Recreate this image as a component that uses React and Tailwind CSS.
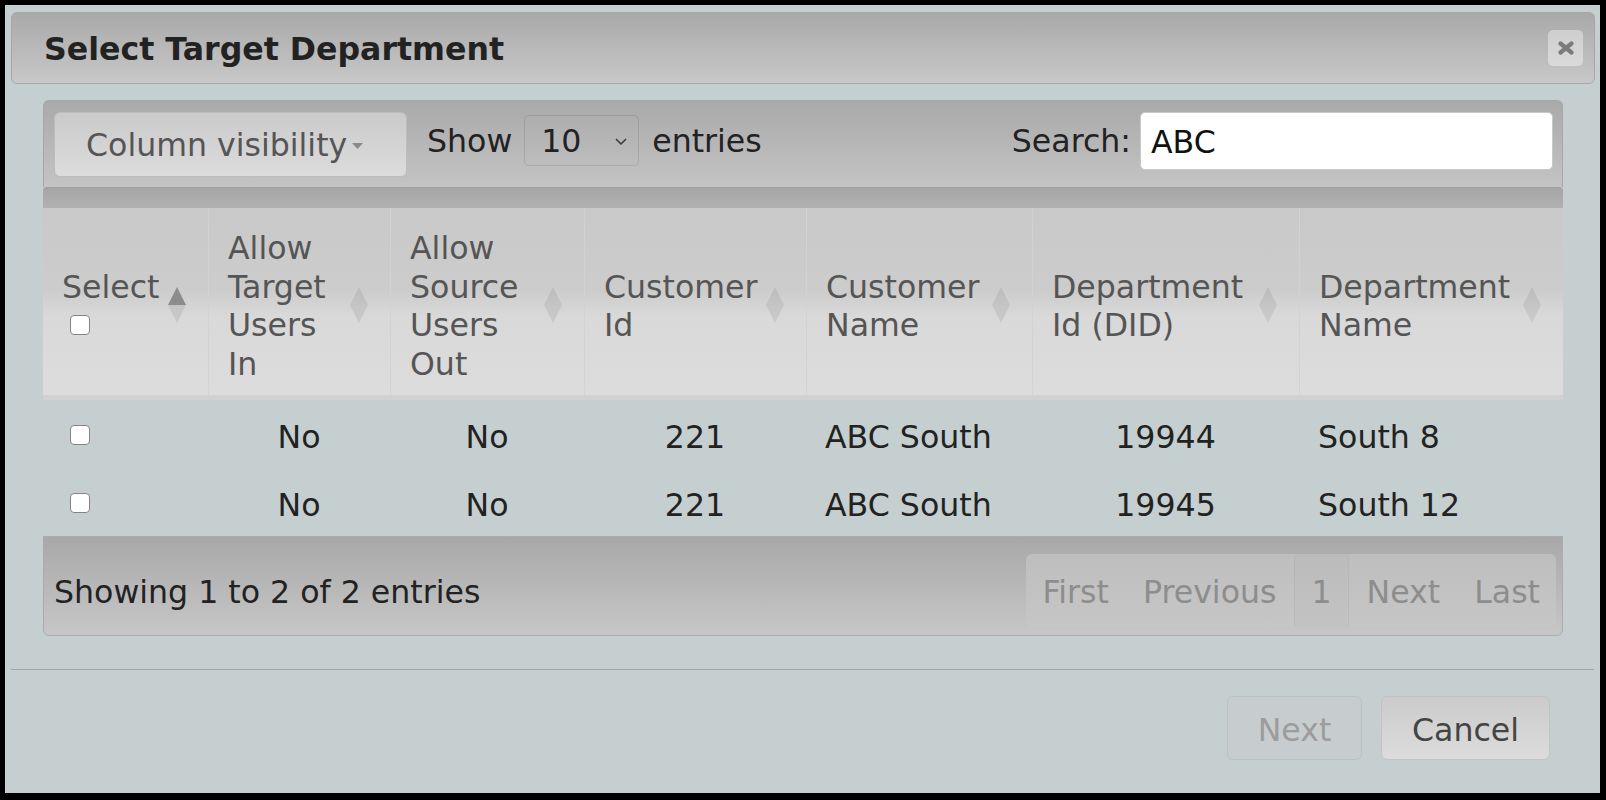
import React from "react";

const columns = [
  { label: "Select", width: "w-[165px]", active: true },
  { label: "Allow Target Users In", width: "w-[182px]" },
  { label: "Allow Source Users Out", width: "w-[194px]" },
  { label: "Customer Id", width: "w-[222px]" },
  { label: "Customer Name", width: "w-[226px]" },
  { label: "Department Id (DID)", width: "w-[267px]" },
  { label: "Department Name", width: "w-[264px]" },
];

const rows = [
  { allowIn: "No", allowOut: "No", customerId: "221", customerName: "ABC South", did: "19944", deptName: "South 8" },
  { allowIn: "No", allowOut: "No", customerId: "221", customerName: "ABC South", did: "19945", deptName: "South 12" },
];

const Checkbox = () => (
  <input
    type="checkbox"
    className="appearance-none block w-[20px] h-[20px] rounded-[4px] border-[1.5px] border-[#858585] bg-white"
  />
);

const SortIcon = ({ active }) => (
  <svg width="18" height="36" viewBox="0 0 18 36" className="absolute right-[22px] top-[79px]">
    <path d="M9 0 L18 18 L0 18 Z" fill={active ? "#8c8c8c" : "rgba(0,0,0,0.07)"} />
    <path d="M0 18 L18 18 L9 36 Z" fill="rgba(0,0,0,0.07)" />
  </svg>
);

const App = () => {
  return (
    <div className="w-[1606px] h-[800px] bg-black pt-[5px] pl-[5px] pr-[6px] pb-[7px] font-['DejaVu_Sans',sans-serif] text-[31.6px] text-[#222]">
      <div className="h-full bg-[#c5cfd0] flex flex-col">
        {/* Title bar */}
        <div className="ml-[6px] mr-[5px] mt-[7px] h-[72px] rounded-[6px] border border-[#a2a8a8] bg-linear-to-b from-[#a9a9a9] to-[#c8c8c8] flex items-center justify-between pl-[32px] pr-[11px]">
          <h1 className="font-bold leading-none pt-[3px] text-[#222]">Select Target Department</h1>
          <button className="w-[35px] h-[36px] rounded-[5px] bg-linear-to-b from-[#cecece] to-[#dadada] flex items-center justify-center">
            <svg width="16" height="14" viewBox="0 0 16 14">
              <path d="M2.5 2.5 L13.5 11.5 M13.5 2.5 L2.5 11.5" stroke="#7b7b7b" strokeWidth="4.2" strokeLinecap="round" />
            </svg>
          </button>
        </div>

        {/* Table area */}
        <div className="ml-[38px] mr-[37px] mt-[16px]">
          {/* Toolbar */}
          <div className="h-[87px] rounded-t-[6px] border-x border-t border-[#a4a8a8] bg-linear-to-b from-[#a9a9a9] to-[#c4c4c4] flex items-center pl-[10px] pr-[9px] pb-[7px]">
            <button className="mt-[7px] w-[353px] h-[65px] rounded-[6px] border border-[#bdbdbd] bg-linear-to-b from-[#cacaca] to-[#dcdcdc] flex items-center pl-[31px] pt-[3px] text-[#555] leading-none">
              Column visibility
              <svg width="11" height="6" viewBox="0 0 11 6" className="ml-[5px] mt-[1px]">
                <path d="M0 0 L11 0 L5.5 6 Z" fill="#8a8a8a" />
              </svg>
            </button>
            <span className="ml-[20px] leading-none pt-[2px]">Show</span>
            <div className="ml-[12px] w-[115px] h-[51px] rounded-[5px] border border-black/10 flex items-center justify-between pl-[16px] pr-[11px] pt-[2px] leading-none">
              <span>10</span>
              <svg width="12" height="7" viewBox="0 0 12 7">
                <path d="M1 1 L6 6 L11 1" stroke="#3a3a3a" strokeWidth="1.5" fill="none" />
              </svg>
            </div>
            <span className="ml-[13px] leading-none pt-[2px]">entries</span>
            <div className="flex-1" />
            <span className="leading-none pt-[2px]">Search:</span>
            <input
              type="text"
              defaultValue="ABC"
              className="ml-[9px] w-[413px] h-[58px] rounded-[5px] border border-[#c8c8c8] bg-white pl-[10px] pt-[2px] text-[#111] outline-none"
            />
          </div>

          {/* Scroll head strip */}
          <div className="h-[21px] rounded-t-[4px] border-t border-[#9f9f9f] bg-linear-to-b from-[#a6a6a6] to-[#b0b0b0]" />

          <table className="w-[1520px] table-fixed border-separate border-spacing-0 leading-[38.6px]">
            <colgroup>
              {columns.map((c) => (
                <col key={c.label} className={c.width} />
              ))}
            </colgroup>
            <thead>
              <tr>
                {columns.map((c, i) => (
                  <th
                    key={c.label}
                    className={`relative text-left font-normal align-middle text-[#555] pl-[19px] pr-[38px] pt-[21px] pb-[12px] border-b-[5px] border-b-[#d1d1d1] bg-[linear-gradient(to_bottom,#c9c9c9_0%,#cccccc_44%,#d9d9d9_58%,#dcdcdc_100%)] ${
                      i > 0 ? "border-l border-l-[#d2d2d2]" : ""
                    }`}
                  >
                    {c.label}
                    {i === 0 && (
                      <div className="h-[38px] flex items-center pl-[8px]">
                        <Checkbox />
                      </div>
                    )}
                    <SortIcon active={c.active} />
                  </th>
                ))}
              </tr>
            </thead>
            <tbody>
              {rows.map((r) => (
                <tr key={r.did} className="h-[68px]">
                  <td className="align-middle pl-[27px] pt-[2px]">
                    <Checkbox />
                  </td>
                  <td className="align-middle text-center pt-[6px]">{r.allowIn}</td>
                  <td className="align-middle text-center pt-[6px]">{r.allowOut}</td>
                  <td className="align-middle text-center pt-[6px]">{r.customerId}</td>
                  <td className="align-middle pl-[19px] pt-[6px]">{r.customerName}</td>
                  <td className="align-middle text-center pt-[6px]">{r.did}</td>
                  <td className="align-middle pl-[19px] pt-[6px]">{r.deptName}</td>
                </tr>
              ))}
            </tbody>
          </table>

          {/* Footer */}
          <div className="h-[100px] rounded-b-[6px] border border-[#a7adad] bg-linear-to-b from-[#a8a8a8] to-[#c7c7c7] flex items-center justify-between pl-[10px] pr-[6px] pt-[17px] pb-[8px]">
            <span className="leading-none pt-[3px]">Showing 1 to 2 of 2 entries</span>
            <div className="h-[73px] rounded-[6px] bg-linear-to-b from-[#bebebe] to-[#c6c6c6] flex gap-[2px] text-[#8d8d8d] leading-none">
              <span className="px-[16px] pt-[3px] flex items-center">First</span>
              <span className="px-[16px] pt-[3px] flex items-center">Previous</span>
              <span className="px-[16px] pt-[3px] flex items-center rounded-t-[4px] border-x border-black/[0.04] bg-black/[0.012]">1</span>
              <span className="px-[16px] pt-[3px] flex items-center">Next</span>
              <span className="px-[16px] pt-[3px] flex items-center">Last</span>
            </div>
          </div>
        </div>

        {/* Divider */}
        <div className="mt-[33px] mx-[6px] h-px bg-[#a0a8a9]" />

        {/* Buttons */}
        <div className="mt-[26px] flex justify-end gap-[19px] pr-[50px]">
          <button className="w-[135px] h-[64px] rounded-[6px] border border-black/5 bg-[#c7cdce] pt-[4px] text-[#9c9c9c] leading-none">
            Next
          </button>
          <button className="w-[169px] h-[64px] rounded-[6px] border border-[#c2c2c2] bg-linear-to-b from-[#cbcbcb] to-[#dcdcdc] pt-[4px] text-[#444] leading-none">
            Cancel
          </button>
        </div>
      </div>
    </div>
  );
};

export default App;
